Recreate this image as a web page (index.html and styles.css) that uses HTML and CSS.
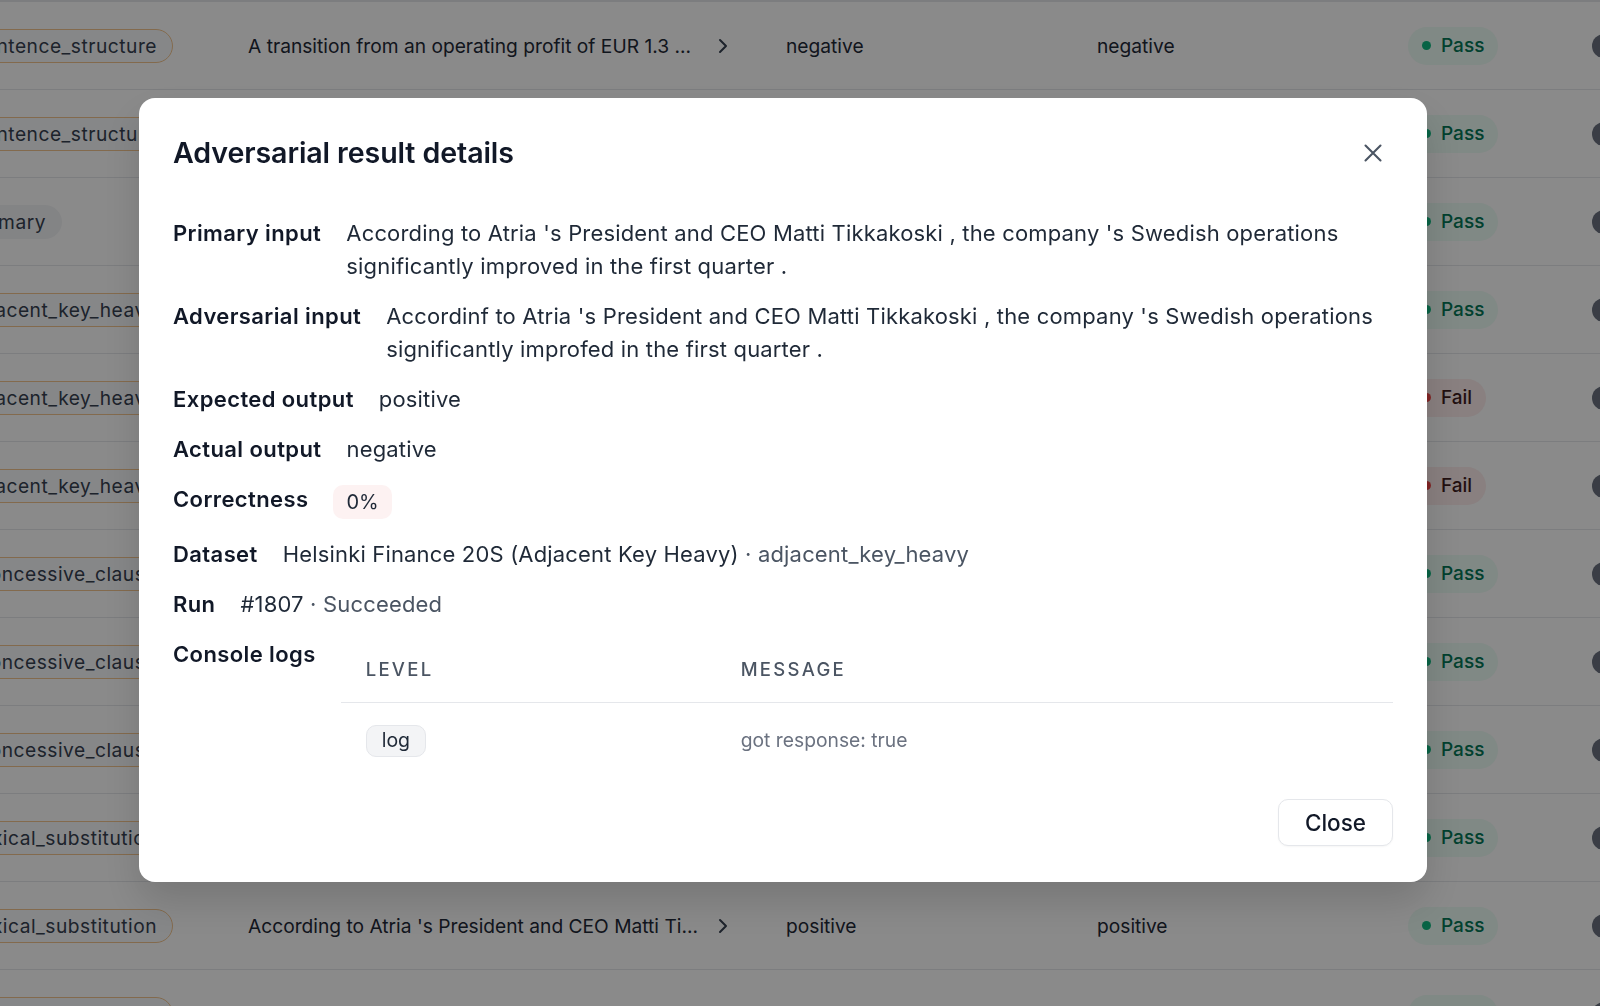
FILE: index.html
```html
<!DOCTYPE html>
<html lang="en">
<head>
  <meta charset="UTF-8" />
  <meta name="viewport" content="width=device-width, initial-scale=1" />
  <title>Adversarial results</title>
  <link rel="stylesheet" href="styles.css">
</head>
<body>
  <div class="results">
    <div class="result-row">
      <div class="cell-tag"><span class="tag">sentence_structure</span></div>
      <div class="cell-input"><span>A transition from an operating profit of EUR 1.3 ...</span><svg class="chevron" viewBox="0 0 10 16"><path d="M2 2l6 6-6 6"/></svg></div>
      <div class="cell-out expected">negative</div>
      <div class="cell-out">negative</div>
      <div class="cell-status"><span class="status pass"><i></i>Pass</span></div>
      <div class="cell-action"><span class="dot-btn"></span></div>
    </div>
    <div class="result-row">
      <div class="cell-tag"><span class="tag">sentence_structure</span></div>
      <div class="cell-input"><span>Operating profit rose to EUR 13.1 mn from EUR ...</span><svg class="chevron" viewBox="0 0 10 16"><path d="M2 2l6 6-6 6"/></svg></div>
      <div class="cell-out expected">positive</div>
      <div class="cell-out">positive</div>
      <div class="cell-status"><span class="status pass"><i></i>Pass</span></div>
      <div class="cell-action"><span class="dot-btn"></span></div>
    </div>
    <div class="result-row">
      <div class="cell-tag"><span class="tag plain short">summary</span></div>
      <div class="cell-input"><span>The company posted a profit of EUR 4.2 mn ...</span><svg class="chevron" viewBox="0 0 10 16"><path d="M2 2l6 6-6 6"/></svg></div>
      <div class="cell-out expected">positive</div>
      <div class="cell-out">positive</div>
      <div class="cell-status"><span class="status pass"><i></i>Pass</span></div>
      <div class="cell-action"><span class="dot-btn"></span></div>
    </div>
    <div class="result-row">
      <div class="cell-tag"><span class="tag">adjacent_key_heavy</span></div>
      <div class="cell-input"><span>Net sales increased by 18.5 % to EUR 167.8 ...</span><svg class="chevron" viewBox="0 0 10 16"><path d="M2 2l6 6-6 6"/></svg></div>
      <div class="cell-out expected">positive</div>
      <div class="cell-out">positive</div>
      <div class="cell-status"><span class="status pass"><i></i>Pass</span></div>
      <div class="cell-action"><span class="dot-btn"></span></div>
    </div>
    <div class="result-row">
      <div class="cell-tag"><span class="tag">adjacent_key_heavy</span></div>
      <div class="cell-input"><span>According to Atria 's President and CEO Matti Ti...</span><svg class="chevron" viewBox="0 0 10 16"><path d="M2 2l6 6-6 6"/></svg></div>
      <div class="cell-out expected">positive</div>
      <div class="cell-out">negative</div>
      <div class="cell-status"><span class="status fail"><i></i>Fail</span></div>
      <div class="cell-action"><span class="dot-btn"></span></div>
    </div>
    <div class="result-row">
      <div class="cell-tag"><span class="tag">adjacent_key_heavy</span></div>
      <div class="cell-input"><span>The Finnish company 's net sales rose to EUR ...</span><svg class="chevron" viewBox="0 0 10 16"><path d="M2 2l6 6-6 6"/></svg></div>
      <div class="cell-out expected">positive</div>
      <div class="cell-out">neutral</div>
      <div class="cell-status"><span class="status fail"><i></i>Fail</span></div>
      <div class="cell-action"><span class="dot-btn"></span></div>
    </div>
    <div class="result-row">
      <div class="cell-tag"><span class="tag">concessive_clause</span></div>
      <div class="cell-input"><span>Although the market weakened , profit grew ...</span><svg class="chevron" viewBox="0 0 10 16"><path d="M2 2l6 6-6 6"/></svg></div>
      <div class="cell-out expected">positive</div>
      <div class="cell-out">positive</div>
      <div class="cell-status"><span class="status pass"><i></i>Pass</span></div>
      <div class="cell-action"><span class="dot-btn"></span></div>
    </div>
    <div class="result-row">
      <div class="cell-tag"><span class="tag">concessive_clause</span></div>
      <div class="cell-input"><span>Even though costs rose , the operating margin ...</span><svg class="chevron" viewBox="0 0 10 16"><path d="M2 2l6 6-6 6"/></svg></div>
      <div class="cell-out expected">positive</div>
      <div class="cell-out">positive</div>
      <div class="cell-status"><span class="status pass"><i></i>Pass</span></div>
      <div class="cell-action"><span class="dot-btn"></span></div>
    </div>
    <div class="result-row">
      <div class="cell-tag"><span class="tag">concessive_clause</span></div>
      <div class="cell-input"><span>While sales fell slightly , the company 's order ...</span><svg class="chevron" viewBox="0 0 10 16"><path d="M2 2l6 6-6 6"/></svg></div>
      <div class="cell-out expected">negative</div>
      <div class="cell-out">negative</div>
      <div class="cell-status"><span class="status pass"><i></i>Pass</span></div>
      <div class="cell-action"><span class="dot-btn"></span></div>
    </div>
    <div class="result-row">
      <div class="cell-tag"><span class="tag">lexical_substitution</span></div>
      <div class="cell-input"><span>A shift from an operating profit of EUR 1.3 ...</span><svg class="chevron" viewBox="0 0 10 16"><path d="M2 2l6 6-6 6"/></svg></div>
      <div class="cell-out expected">negative</div>
      <div class="cell-out">negative</div>
      <div class="cell-status"><span class="status pass"><i></i>Pass</span></div>
      <div class="cell-action"><span class="dot-btn"></span></div>
    </div>
    <div class="result-row">
      <div class="cell-tag"><span class="tag">lexical_substitution</span></div>
      <div class="cell-input"><span>According to Atria 's President and CEO Matti Ti...</span><svg class="chevron" viewBox="0 0 10 16"><path d="M2 2l6 6-6 6"/></svg></div>
      <div class="cell-out expected">positive</div>
      <div class="cell-out">positive</div>
      <div class="cell-status"><span class="status pass"><i></i>Pass</span></div>
      <div class="cell-action"><span class="dot-btn"></span></div>
    </div>
    <div class="result-row">
      <div class="cell-tag"><span class="tag">lexical_substitution</span></div>
      <div class="cell-input"><span>According to Atria 's Chief Executive Matti Tikk...</span><svg class="chevron" viewBox="0 0 10 16"><path d="M2 2l6 6-6 6"/></svg></div>
      <div class="cell-out expected">positive</div>
      <div class="cell-out">positive</div>
      <div class="cell-status"><span class="status pass"><i></i>Pass</span></div>
      <div class="cell-action"><span class="dot-btn"></span></div>
    </div>
  </div>

  <div class="backdrop">
    <div class="modal" role="dialog" aria-labelledby="modalTitle">
      <div class="modal-header">
        <h2 id="modalTitle">Adversarial result details</h2>
        <button class="icon-btn" type="button" aria-label="Close">
          <svg viewBox="0 0 18 18"><path d="M1.5 1.5l15 15M16.5 1.5l-15 15"/></svg>
        </button>
      </div>

      <div class="details">
        <div class="detail">
          <span class="label">Primary input</span>
          <span class="value">According to Atria 's President and CEO Matti Tikkakoski , the company 's Swedish operations significantly improved in the first quarter .</span>
        </div>
        <div class="detail">
          <span class="label">Adversarial input</span>
          <span class="value">Accordinf to Atria 's President and CEO Matti Tikkakoski , the company 's Swedish operations significantly improfed in the first quarter .</span>
        </div>
        <div class="detail">
          <span class="label">Expected output</span>
          <span class="value">positive</span>
        </div>
        <div class="detail">
          <span class="label">Actual output</span>
          <span class="value">negative</span>
        </div>
        <div class="detail">
          <span class="label">Correctness</span>
          <span class="score">0%</span>
        </div>
        <div class="detail">
          <span class="label">Dataset</span>
          <span class="value">Helsinki Finance 20S (Adjacent Key Heavy) <span class="muted">· adjacent_key_heavy</span></span>
        </div>
        <div class="detail">
          <span class="label">Run</span>
          <span class="value">#1807 <span class="muted">· Succeeded</span></span>
        </div>
        <div class="detail">
          <span class="label">Console logs</span>
          <table class="logs">
            <thead>
              <tr><th class="col-level">Level</th><th>Message</th></tr>
            </thead>
            <tbody>
              <tr><td><span class="level">log</span></td><td class="msg">got response: true</td></tr>
            </tbody>
          </table>
        </div>
      </div>

      <div class="modal-footer">
        <button class="btn" type="button">Close</button>
      </div>
    </div>
  </div>
</body>
</html>
```

FILE: styles.css
```css
body {
  margin: 0;
  font-family: Inter, "Noto Sans", Arial, sans-serif;
  background: #fff;
  color: #111827;
  overflow: hidden;
}

/* Results table behind the dialog */
.results {
  border-top: 2px solid #e5e7eb;
}
.result-row {
  display: flex;
  align-items: center;
  height: 87px;
  border-bottom: 1px solid #e5e7eb;
  font-size: 19.2px;
  color: #1f2937;
  white-space: nowrap;
}
.cell-tag {
  width: 173px;
  display: flex;
  justify-content: flex-end;
  overflow: hidden;
  flex-shrink: 0;
}
.tag {
  display: inline-flex;
  align-items: center;
  height: 32px;
  padding: 0 15px;
  border: 1px solid #f3c58f;
  border-radius: 999px;
  background: #f8fafc;
  font-size: 19.2px;
  letter-spacing: 0.5px;
  color: #374151;
}
.tag.plain {
  border-color: #f3f4f6;
  background: #f3f4f6;
}
.tag.short {
  margin-right: 111px;
}
.cell-input {
  width: 480px;
  margin-left: 75px;
  display: flex;
  align-items: center;
  justify-content: space-between;
  flex-shrink: 0;
}
.chevron {
  width: 10px;
  height: 16px;
  fill: none;
  stroke: #374151;
  stroke-width: 2;
  stroke-linecap: round;
  stroke-linejoin: round;
}
.cell-out {
  width: 311px;
  flex-shrink: 0;
}
.cell-out.expected {
  margin-left: 58px;
}
.cell-status {
  width: 184px;
  flex-shrink: 0;
}
.status {
  display: inline-flex;
  align-items: center;
  gap: 10px;
  height: 38px;
  padding: 0 14px;
  border-radius: 999px;
  font-size: 19px;
  font-weight: 500;
}
.status i {
  width: 9px;
  height: 9px;
  border-radius: 50%;
}
.status.pass {
  background: #ecfdf5;
  color: #047857;
}
.status.pass i {
  background: #10b981;
}
.status.fail {
  background: #fdecec;
  color: #3f1d1d;
}
.status.fail i {
  background: #ef4444;
}
.dot-btn {
  display: block;
  width: 24px;
  height: 24px;
  border-radius: 50%;
  background: #6b7280;
}

/* Dialog */
.backdrop {
  position: fixed;
  inset: 0;
  background: rgba(0, 0, 0, 0.46);
  padding: 98px 0 0 139px;
}
.modal {
  width: 1288px;
  box-sizing: border-box;
  padding: 35px 34px 36px;
  background: #fff;
  border-radius: 16px;
  box-shadow: 0 20px 40px rgba(0, 0, 0, 0.15);
}
.modal-header {
  display: flex;
  align-items: center;
  justify-content: space-between;
}
.modal-header h2 {
  margin: 0;
  font-size: 28.6px;
  font-weight: 600;
  line-height: 36px;
  letter-spacing: -0.1px;
}
.icon-btn {
  width: 40px;
  height: 40px;
  display: flex;
  align-items: center;
  justify-content: center;
  padding: 0;
  border: none;
  background: none;
  cursor: pointer;
}
.icon-btn svg {
  width: 18px;
  height: 18px;
  fill: none;
  stroke: #4b5563;
  stroke-width: 2.1;
  stroke-linecap: round;
}
.details {
  margin-top: 44px;
  display: flex;
  flex-direction: column;
  gap: 17px;
}
.detail {
  display: flex;
  align-items: flex-start;
  gap: 25px;
  font-size: 22px;
  line-height: 33px;
}
.label {
  flex-shrink: 0;
  font-weight: 600;
  letter-spacing: 0.4px;
  color: #111827;
}
.value {
  letter-spacing: 0.17px;
  color: #1f2937;
}
.muted {
  color: #4b5563;
}
.score {
  display: inline-flex;
  align-items: center;
  height: 34px;
  margin: 2px 0;
  padding: 0 13px;
  border-radius: 10px;
  background: #fdf2f2;
  font-size: 20px;
  color: #1f2937;
}
.logs {
  flex: 1;
  border-collapse: collapse;
  margin-top: -1px;
}
.logs th {
  height: 65px;
  padding: 0 0 0 25px;
  border-bottom: 1px solid #e5e7eb;
  text-align: left;
  font-size: 18.5px;
  font-weight: 500;
  letter-spacing: 2.3px;
  text-transform: uppercase;
  color: #4b5563;
}
.logs th.col-level {
  width: 350px;
}
.logs td {
  height: 74px;
  padding: 0 0 0 25px;
}
.level {
  display: inline-flex;
  align-items: center;
  height: 30px;
  padding: 0 15px;
  border: 1px solid #e5e7eb;
  border-radius: 10px;
  background: #f3f4f6;
  font-size: 19.5px;
  color: #1f2937;
}
.msg {
  font-size: 19.3px;
  color: #6b7280;
}
.modal-footer {
  display: flex;
  justify-content: flex-end;
  margin-top: 22px;
}
.btn {
  height: 47px;
  padding: 0 26px;
  border: 1px solid #e5e7eb;
  border-radius: 10px;
  background: #fff;
  font-family: inherit;
  font-size: 22.5px;
  font-weight: 500;
  color: #111827;
  box-shadow: 0 1px 2px rgba(0, 0, 0, 0.04);
  cursor: pointer;
}
```
